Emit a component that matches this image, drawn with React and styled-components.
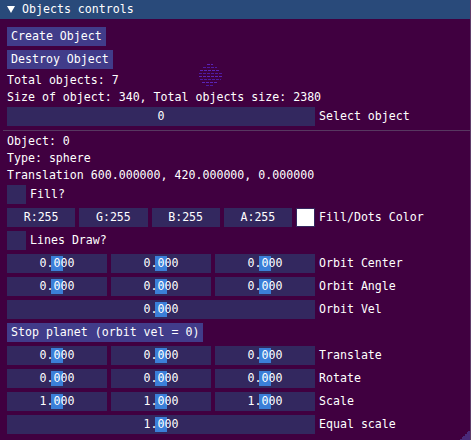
import React from "react";
import styled, { createGlobalStyle } from "styled-components";

const GlobalStyle = createGlobalStyle`
  html, body {
    margin: 0;
    padding: 0;
    background: #400040;
  }

  body {
    font-family: "DejaVu Sans Mono", "Liberation Mono", monospace;
    font-size: 11.6px;
    color: #ffffff;
  }
`;

function Sphere() {
  const rows = [
    [9, 15, 1],
    [5, 19, 4],
    [2, 22, 7],
    [1, 24, 10],
    [1, 24, 13],
    [2, 23, 16],
    [4, 20, 19],
    [8, 16, 22],
  ];
  return (
    <SphereBox width="26" height="25" viewBox="0 0 26 25">
      {rows.map(([x1, x2, y], i) => (
        <line
          key={i}
          x1={x1}
          x2={x2}
          y1={y + 0.5}
          y2={y + 0.5}
          stroke={i % 2 ? "#5224c4" : "#6430e0"}
          strokeWidth="1"
          strokeDasharray="3 1"
          opacity="0.75"
        />
      ))}
    </SphereBox>
  );
}

function Slider({ value, grab = true, span }) {
  return (
    <Frame span={span}>
      {grab && <Grab />}
      <FrameText>{value}</FrameText>
    </Frame>
  );
}

function Slider3({ values, label }) {
  return (
    <Row>
      <Triple>
        {values.map((v, i) => (
          <Slider key={i} value={v} />
        ))}
      </Triple>
      <Label>{label}</Label>
    </Row>
  );
}

function App() {
  return (
    <>
      <GlobalStyle />
      <Window>
        <TitleBar>
          <svg width="8" height="7" viewBox="0 0 8 7">
            <polygon points="0,0 8,0 4,7" fill="#ffffff" />
          </svg>
          <TitleText>Objects controls</TitleText>
        </TitleBar>
        <Content>
          <Button>Create Object</Button>
          <Button>Destroy Object</Button>
          <Text>Total objects: 7</Text>
          <Text>Size of object: 340, Total objects size: 2380</Text>
          <Row>
            <Slider value="0" grab={false} span="wide" />
            <Label>Select object</Label>
          </Row>
          <Separator />
          <Text>Object: 0</Text>
          <Text>Type: sphere</Text>
          <Text>Translation 600.000000, 420.000000, 0.000000</Text>
          <Row>
            <Checkbox />
            <Label>Fill?</Label>
          </Row>
          <Row>
            <ColorInputs>
              <Frame>R:255</Frame>
              <Frame>G:255</Frame>
              <Frame>B:255</Frame>
              <Frame>A:255</Frame>
            </ColorInputs>
            <Swatch />
            <Label>Fill/Dots Color</Label>
          </Row>
          <Row>
            <Checkbox />
            <Label>Lines Draw?</Label>
          </Row>
          <Slider3 values={["0.000", "0.000", "0.000"]} label="Orbit Center" />
          <Slider3 values={["0.000", "0.000", "0.000"]} label="Orbit Angle" />
          <Row>
            <Slider value="0.000" span="wide" />
            <Label>Orbit Vel</Label>
          </Row>
          <Button>Stop planet (orbit vel = 0)</Button>
          <Slider3 values={["0.000", "0.000", "0.000"]} label="Translate" />
          <Slider3 values={["0.000", "0.000", "0.000"]} label="Rotate" />
          <Slider3 values={["1.000", "1.000", "1.000"]} label="Scale" />
          <Row>
            <Slider value="1.000" span="wide" />
            <Label>Equal scale</Label>
          </Row>
        </Content>
        <Sphere />
        <ResizeGrip />
      </Window>
    </>
  );
}

const Window = styled.div`
  position: relative;
  width: 471px;
  height: 440px;
  box-sizing: border-box;
  overflow: hidden;
  background: #400040;
  border-right: 1px solid #5e3c6a;
`;

const TitleBar = styled.div`
  height: 19px;
  display: flex;
  align-items: center;
  gap: 7px;
  padding-left: 7px;
  background: #294a7a;
`;

const TitleText = styled.span`
  line-height: 13px;
`;

const Content = styled.div`
  display: flex;
  flex-direction: column;
  align-items: flex-start;
  gap: 4px;
  padding: 8px 0 0 7px;
`;

const Text = styled.div`
  height: 13px;
  line-height: 14px;
  white-space: pre;
`;

const Button = styled.div`
  height: 19px;
  line-height: 19px;
  padding: 0 4px;
  background: #413c8a;
  white-space: pre;
`;

const Row = styled.div`
  display: flex;
  align-items: center;
  gap: 4px;
  height: 19px;
`;

const Label = styled.span`
  line-height: 19px;
  white-space: pre;
`;

const Frame = styled.div`
  position: relative;
  width: ${(p) => (p.span === "wide" ? "308px" : "auto")};
  height: 19px;
  display: flex;
  align-items: center;
  justify-content: center;
  background: #33285f;
  line-height: 19px;
`;

const FrameText = styled.span`
  position: relative;
`;

const Grab = styled.div`
  position: absolute;
  top: 2px;
  bottom: 2px;
  left: calc(50% - 6px);
  width: 12px;
  background: #3b7fd8;
`;

const Triple = styled.div`
  width: 308px;
  display: grid;
  grid-template-columns: repeat(3, 1fr);
  gap: 4px;
`;

const ColorInputs = styled.div`
  width: 285px;
  display: grid;
  grid-template-columns: repeat(4, 1fr);
  gap: 4px;
`;

const Swatch = styled.div`
  width: 19px;
  height: 19px;
  box-sizing: border-box;
  background: #ffffff;
  border: 1px solid #33285f;
`;

const Checkbox = styled.div`
  width: 19px;
  height: 19px;
  background: #33285f;
`;

const Separator = styled.div`
  align-self: stretch;
  height: 1px;
  margin: 0 0 -1px -4px;
  background: #573760;
`;

const SphereBox = styled.svg`
  position: absolute;
  left: 198px;
  top: 63px;
`;

const ResizeGrip = styled.div`
  position: absolute;
  right: 0;
  bottom: 0;
  width: 10px;
  height: 10px;
  background: linear-gradient(135deg, transparent 50%, #4a2a7a 50%);
`;

export default App;
